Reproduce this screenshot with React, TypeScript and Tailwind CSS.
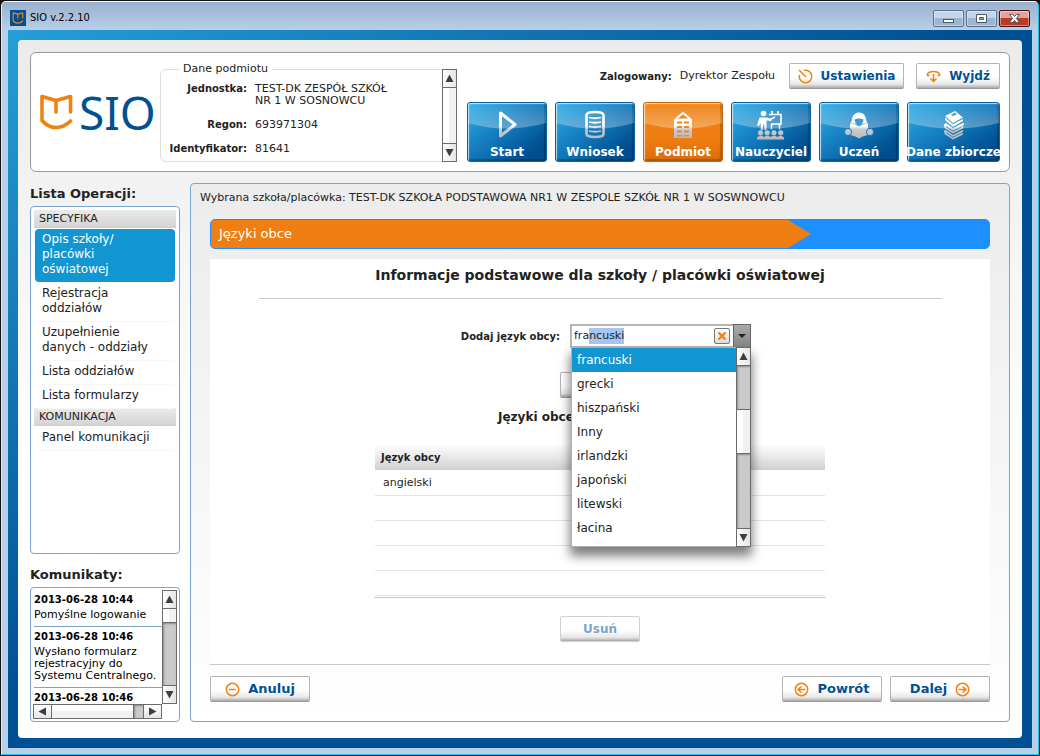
import { useEffect, useRef, type ReactNode } from "react";

const MENU = [
  {
    title: "SPECYFIKA",
    items: ["Opis szkoły/ placówki oświatowej", "Rejestracja oddziałów", "Uzupełnienie danych - oddziały", "Lista oddziałów", "Lista formularzy"],
  },
  { title: "KOMUNIKACJA", items: ["Panel komunikacji"] },
];

const MESSAGES = [
  { date: "2013-06-28 10:44", text: "Pomyślne logowanie" },
  { date: "2013-06-28 10:46", text: "Wysłano formularz rejestracyjny do Systemu Centralnego." },
  { date: "2013-06-28 10:46", text: "" },
];

const LANGUAGES = ["francuski", "grecki", "hiszpański", "Inny", "irlandzki", "japoński", "litewski", "łacina"];

function Mark({ className }: { className: string }) {
  return (
    <svg viewBox="0 0 33 36" fill="none" stroke="#f0820f" strokeWidth="3.600" strokeLinecap="round" strokeLinejoin="round" className={className} aria-hidden="true">
      <path d="M30.500 18V2.500L16 6.500L2 2.500V26.500Q8 33.500 16 33.500Q24 33.500 30.500 27" />
      <path d="M16 7V18" />
    </svg>
  );
}

function Arrow({ dir }: { dir: "up" | "down" | "left" | "right" }) {
  const d = { up: "M4.500 0.500L8.500 8H0.500Z", down: "M4.500 8.500L8.500 1H0.500Z", left: "M0.500 4.500L8 0.500V8.500Z", right: "M8.500 4.500L1 0.500V8.500Z" }[dir];
  return (
    <svg viewBox="0 0 9 9" className="size-[9px]" aria-hidden="true">
      <path d={d} fill="#3d3d3d" />
    </svg>
  );
}

function VScroll({ before, thumb, after }: { before: string; thumb: string; after: string }) {
  const button = "flex h-[18px] shrink-0 items-center justify-center border-[#6b6b6b] bg-linear-to-r from-white to-[#e4e4e4]";
  return (
    <div className="flex w-[15px] shrink-0 flex-col border border-[#6b6b6b] bg-[#cacaca]">
      <button type="button" aria-label="Przewiń w górę" className={`${button} border-b`}><Arrow dir="up" /></button>
      <div className={`${before} shadow-[inset_1px_1px_2px_#8c8c8c]`} />
      <div className={`${thumb} border-[#6b6b6b] bg-linear-to-r from-white from-50% to-[#f1f1f1] to-50%`} />
      <div className={`${after} shadow-[inset_1px_1px_2px_#8c8c8c]`} />
      <button type="button" aria-label="Przewiń w dół" className={`${button} border-t`}><Arrow dir="down" /></button>
    </div>
  );
}

function PushButton({ children, className = "", disabled = false, label }: { children?: ReactNode; className?: string; disabled?: boolean; label?: string }) {
  return (
    <button
      type="button"
      disabled={disabled}
      aria-label={label}
      className={`flex h-[26px] items-center justify-center gap-2 rounded-[2px] border border-[#b4b4b4] border-b-[#989898] bg-linear-to-b from-white from-55% via-[#e6e6e6] via-85% to-[#a8a8a8] font-bold text-[#005193] disabled:border-[#cfcfcf] disabled:text-[#7ba5cb] ${className}`}
    >
      {children}
    </button>
  );
}

function RoundIcon({ d }: { d: string }) {
  return (
    <svg viewBox="0 0 15 15" fill="none" stroke="#f0820f" strokeWidth="1.500" className="size-[15px]" aria-hidden="true">
      <circle cx="7.500" cy="7.500" r="6.200" />
      <path d={d} />
    </svg>
  );
}

function NavTile({ label, icon, active = false, wide = false }: { label: string; icon: ReactNode; active?: boolean; wide?: boolean }) {
  const tone = active ? "border-[#c9650a] bg-linear-to-b from-[#ef7f12] from-60% to-[#dc6c08]" : "border-[#0a63a5] bg-linear-to-br from-[#2aa9e4] from-5% via-[#1176b8] via-50% to-[#004d8e] to-85%";
  return (
    <button
      type="button"
      className={`relative flex h-[60px] ${wide ? "w-[93px]" : "w-20"} flex-col items-center justify-between rounded-[3px] border pt-[7px] text-[12px] leading-[18px] font-bold whitespace-nowrap text-white shadow-[inset_1px_1px_1px_rgba(255,255,255,0.7),inset_-2px_-2px_1px_rgba(0,0,0,0.2)] ${tone}`}
    >
      <svg viewBox="0 0 80 26" preserveAspectRatio="none" className="absolute inset-x-0 top-0 h-[26px] w-full" aria-hidden="true">
        <defs>
          <linearGradient id="tileGloss" x1="0" y1="0" x2="0" y2="1">
            <stop offset="0" stopColor="#fff" stopOpacity="0.050" />
            <stop offset="1" stopColor="#fff" stopOpacity="0.320" />
          </linearGradient>
        </defs>
        <path d="M0 0H80V20Q40 31 0 20Z" fill="url(#tileGloss)" />
      </svg>
      <svg viewBox="0 0 32 32" className="relative size-8" aria-hidden="true">
        <defs>
          <linearGradient id="tileInk" gradientUnits="userSpaceOnUse" x1="0" y1="0" x2="0" y2="32">
            <stop offset="0.500" stopColor="#fff" />
            <stop offset="0.600" stopColor="#c8cccf" />
            <stop offset="1" stopColor="#b0b4b8" />
          </linearGradient>
        </defs>
        {icon}
      </svg>
      <span className="relative">{label}</span>
    </button>
  );
}

const INK = "url(#tileInk)";

const startIcon = <path d="M9.500 3V26L24 14.500Z" fill="none" stroke={INK} strokeWidth="3" strokeLinejoin="round" />;

const databaseIcon = (
  <g fill="none" stroke={INK}>
    <path d="M7.500 5Q7.500 2 16 2T24.500 5V24Q24.500 27 16 27T7.500 24Z" strokeWidth="2.600" />
    <path d="M10 7.500Q16 9 22 7.500M10 12Q16 13.500 22 12M10 16.500Q16 18 22 16.500M10 21Q16 22.500 22 21" strokeWidth="1.800" />
  </g>
);

const buildingIcon = (
  <g>
    <path d="M7 28V9.500L16 1.500L25 9.500V28Z" fill={INK} />
    <path d="M11 8.500L16 4.200L21 8.500ZM10 11.500H15V13.500H10ZM17 11.500H22V13.500H17ZM10 16H15V18H10ZM17 16H22V18H17ZM10 20.500H15V22.500H10ZM17 20.500H22V22.500H17ZM10 25H15V26.500H10ZM17 25H22V26.500H17Z" fill="#ef8724" />
  </g>
);

const teacherIcon = (
  <g fill={INK}>
    <circle cx="8.500" cy="3.500" r="2.800" />
    <path d="M4.500 7.500H11.500L17 9L16 11L11.500 10.500V20H9.200V14.500H8V20H5.700V13L3.500 16.500L2 15Z" />
    <path d="M14 4.500H26V14H16M17 4V1M23 4V1M16.500 14V19.500M24.500 14V19.500M15 9.500L20 7" fill="none" stroke={INK} strokeWidth="1.600" />
    <circle cx="5.500" cy="22.800" r="2.600" /><circle cx="12.200" cy="22.800" r="2.600" /><circle cx="19" cy="22.800" r="2.600" /><circle cx="25.700" cy="22.800" r="2.600" />
    <path d="M2 29.500V27.500Q5.500 24.500 9 27Q12.500 24.500 15.500 27Q19 24.500 22.500 27Q26 24.500 29 27.500V29.500Z" />
  </g>
);

const pupilIcon = (
  <g>
    <path d="M9 10Q9.500 2.500 16 2.500T23 10L24.500 13.500H7.500Z" fill="#fff" />
    <path d="M11.500 9.500Q16 7.500 20.500 9.500Q20.500 13 16 15.500Q11.500 13 11.500 9.500Z" fill="#3a9bd1" />
    <path d="M7 13.500Q12 13.500 16 16.500Q20 13.500 25 13.500V25Q20 25.500 16 28.500Q12 25.500 7 25Z" fill={INK} />
    <circle cx="5" cy="22" r="3.600" fill={INK} stroke="#1878b8" /><circle cx="27" cy="22" r="3.600" fill={INK} stroke="#1878b8" />
  </g>
);

const booksIcon = (
  <g fill={INK}>
    <path d="M7 6L17 1L25 7.500L15 13Z" />
    <path d="M7 7.500L15 14.300L25 9V11L15 16.800L7 10Z" />
    <path d="M13 4.500L17 2.600L19 4.200L15 6.300Z" fill="#4aa3d6" />
    <path d="M6 14.500L8 13L15 18L25 13L26.500 14L24.500 15.500L25.500 18L15 23.500L6.500 18Z" />
    <path d="M6 20.500L8 20L15 25L24.500 20L25.500 21L24 22L25 24.500L15 29.500L6.500 24Z" />
    <path d="M8 16.500L15 21.300L24 16.500M8 22.500L15 27.300L24 22.500" fill="none" stroke="#0f69ab" strokeWidth="0.700" />
  </g>
);

function WindowButton({ label, danger = false, children }: { label: string; danger?: boolean; children: ReactNode }) {
  return (
    <button
      type="button"
      aria-label={label}
      className={`flex h-[17px] w-[31px] items-center justify-center rounded-[2px] border shadow-[inset_0_0_0_1px_rgba(255,255,255,0.4)] ${danger ? "border-[#4a1019] bg-linear-to-b from-[#e4a299] from-50% to-[#b93a26] to-50%" : "border-[#5c6f8b] bg-linear-to-b from-[#c3d5ea] from-50% to-[#9bb6d2] to-50%"}`}
    >
      <svg viewBox="0 0 13 11" className="h-[11px] w-[13px]" stroke="#4f5867" fill="#fff" aria-hidden="true">{children}</svg>
    </button>
  );
}

function TitleBar() {
  return (
    <header className="-mx-1.5 flex h-7 shrink-0 items-center bg-linear-to-b from-[#9ab1cf] to-[#b8cfe9] px-2 pt-1.5 pb-0.5">
      <span className="flex size-4 items-center justify-center bg-[#005193]"><Mark className="size-3" /></span>
      <h1 className="ml-1 grow font-['DejaVu_Sans_Condensed','DejaVu_Sans',sans-serif] text-[11px] text-black">SIO v.2.2.10</h1>
      <div className="flex gap-0.5">
        <WindowButton label="Minimalizuj"><rect x="1.500" y="6.500" width="10" height="3" /></WindowButton>
        <WindowButton label="Maksymalizuj"><path fillRule="evenodd" d="M1.500 1.500H11.500V9.500H1.500ZM4.500 4.500V6.500H8.500V4.500Z" /></WindowButton>
        <WindowButton label="Zamknij" danger><path d="M1.500 1.500H4.500L6.500 3.500L8.500 1.500H11.500L8.500 5.500L11.500 9.500H8.500L6.500 7.500L4.500 9.500H1.500L4.500 5.500Z" /></WindowButton>
      </div>
    </header>
  );
}

function TopCard() {
  const rows = [
    ["Jednostka:", "TEST-DK ZESPÓŁ SZKÓŁ NR 1 W SOSNOWCU"],
    ["Regon:", "693971304"],
    ["Identyfikator:", "81641"],
  ];
  return (
    <section className="mb-[11px] flex h-[120px] shrink-0 rounded-md border border-[#9b9b9b] bg-white">
      <div className="flex w-[129px] shrink-0 items-center gap-1.5 pl-[9px]">
        <Mark className="h-9 w-[33px]" />
        <span className="font-['Noto_Sans',sans-serif] text-[46px] leading-[50px] text-[#005193]">SIO</span>
      </div>
      <div className="relative mt-[9px] h-[100px] w-[297px] shrink-0">
        <fieldset className="h-full rounded-md border border-[#dcdcdc]">
          <legend className="ml-[18px] px-1 text-[11px] leading-[14px]">Dane podmiotu</legend>
          <dl className="grid grid-cols-[86px_150px] gap-x-2 text-[11px] leading-3">
            {rows.map(([k, v]) => (
              <div key={k} className="contents">
                <dt className="mt-[7px] mb-[5px] text-right text-[10px] leading-3 font-bold whitespace-nowrap">{k}</dt>
                <dd className="mt-[7px] mb-[5px]">{v}</dd>
              </div>
            ))}
          </dl>
        </fieldset>
        <div className="absolute top-[7px] right-0 bottom-0 flex bg-white">
          <VScroll before="h-0" thumb="grow" after="h-0" />
        </div>
      </div>
      <div className="flex grow flex-col items-end pr-[9px]">
        <div className="mt-2.5 flex items-center">
          <span className="mr-2 text-[10px] font-bold">Zalogowany:</span>
          <span className="mr-3.5 text-[11px]">Dyrektor Zespołu</span>
          <PushButton className="mr-3 w-[115px] text-[12px]">
            <svg viewBox="0 0 15 15" fill="none" stroke="#f0820f" strokeWidth="1.500" className="size-[15px]" aria-hidden="true">
              <path d="M6 1.500A6.200 6.200 0 1 1 1.500 6M1 1L8 8" />
            </svg>
            Ustawienia
          </PushButton>
          <PushButton className="w-[84px] text-[12px]">
            <svg viewBox="0 0 15 15" fill="none" stroke="#f0820f" strokeWidth="1.500" className="size-[15px]" aria-hidden="true">
              <path d="M3.500 6.500H1.500V4.500Q3.500 2.500 7.500 2.500T13.500 4.500V6.500H11.500M7.500 5V12.500M4.500 9.500L7.500 12.500L10.500 9.500" />
            </svg>
            Wyjdź
          </PushButton>
        </div>
        <nav className="mt-[13px] flex gap-2">
          <NavTile label="Start" icon={startIcon} />
          <NavTile label="Wniosek" icon={databaseIcon} />
          <NavTile label="Podmiot" icon={buildingIcon} active />
          <NavTile label="Nauczyciel" icon={teacherIcon} />
          <NavTile label="Uczeń" icon={pupilIcon} />
          <NavTile label="Dane zbiorcze" icon={booksIcon} wide />
        </nav>
      </div>
    </section>
  );
}

function Sidebar() {
  return (
    <aside className="flex w-[150px] shrink-0 flex-col pt-0.5">
      <h2 className="mb-[3px] text-[13px] leading-[18px] font-bold">Lista Operacji:</h2>
      <nav className="grow rounded border border-[#7ba5cb] bg-white p-[3px]">
        {MENU.map((group) => (
          <section key={group.title}>
            <h3 className="mb-px border-b border-[#cfcfcf] bg-linear-to-b from-[#ebebeb] to-[#d4d4d4] pl-[5px] text-[11px] leading-[17px]">{group.title}</h3>
            <ul className="flex flex-col gap-px px-px">
              {group.items.map((item, i) => {
                const active = group.title === "SPECYFIKA" && i === 0;
                return (
                  <li key={item}>
                    <a href="#" className={`block rounded pt-[3px] pr-4 pb-[5px] pl-[7px] text-[12px] leading-[15px] ${active ? "bg-[#1196d1] text-white" : "shadow-[0_1px_0_#f7f7f7]"}`}>
                      {item}
                    </a>
                  </li>
                );
              })}
            </ul>
          </section>
        ))}
      </nav>
      <h2 className="mt-3 mb-[3px] text-[13px] leading-[18px] font-bold">Komunikaty:</h2>
      <section className="flex h-[135px] shrink-0 rounded border border-[#7ba5cb] bg-white p-0.5">
        <div className="flex min-w-0 grow flex-col">
          <div className="grow overflow-hidden">
            {MESSAGES.map((m, i) => (
              <article key={i} className="ml-px border-b border-[#7ba5cb] pt-px pb-[5px] text-black">
                <h4 className="mb-px text-[10px] leading-[17px] font-bold">{m.date}</h4>
                <p className="text-[11px] leading-3">{m.text}</p>
              </article>
            ))}
          </div>
          <div className="flex h-[15px] shrink-0 border border-[#6b6b6b] bg-[#cacaca]">
            <button type="button" aria-label="Przewiń w lewo" className="flex w-[18px] items-center justify-center border-r border-[#6b6b6b] bg-linear-to-b from-white to-[#e4e4e4]"><Arrow dir="left" /></button>
            <div className="grow bg-linear-to-b from-white from-50% to-[#f1f1f1] to-50%" />
            <div className="w-2.5 border-l border-[#6b6b6b] shadow-[inset_1px_1px_2px_#8c8c8c]" />
            <button type="button" aria-label="Przewiń w prawo" className="flex w-[18px] items-center justify-center border-l border-[#6b6b6b] bg-linear-to-b from-white to-[#e4e4e4]"><Arrow dir="right" /></button>
          </div>
        </div>
        <div className="mb-[15px] flex">
          <VScroll before="h-0" thumb="h-3.5 border-b" after="grow" />
        </div>
      </section>
    </aside>
  );
}

function LanguagePicker() {
  const input = useRef<HTMLInputElement>(null);
  useEffect(() => {
    input.current?.focus();
    input.current?.setSelectionRange(3, 9);
  }, []);
  return (
    <div className="relative z-10 h-6 w-[181px]">
      <div className="flex h-full border-2 border-[#b5b5b5] bg-white">
        <input
          id="lang"
          ref={input}
          defaultValue="francuski"
          role="combobox"
          aria-expanded="true"
          aria-controls="lang-list"
          className="w-0 grow pl-0.5 text-[11px] outline-none selection:bg-[#a6c6f1] selection:text-[#222]"
        />
        <button type="button" aria-label="Wyczyść" className="mt-0.5 mr-[3px] flex size-4 items-center justify-center rounded-[2px] border border-[#777] bg-linear-to-b from-white to-[#ddd]">
          <svg viewBox="0 0 10 10" className="size-2.5" stroke="#f0820f" strokeWidth="2.400" aria-hidden="true"><path d="M1.500 1.500L8.500 8.500M8.500 1.500L1.500 8.500" /></svg>
        </button>
        <button type="button" aria-label="Rozwiń listę" className="-my-0.5 -mr-0.5 flex w-[18px] items-center justify-center border border-[#666] bg-linear-to-b from-[#aaa] to-[#858585]">
          <svg viewBox="0 0 8 4" className="h-1 w-2" aria-hidden="true"><path d="M0 0H8L4 4Z" fill="#222" /></svg>
        </button>
      </div>
      <div className="absolute top-[23px] right-0 left-px flex border border-r-0 border-[#b0b0b0] bg-white shadow-[0_8px_10px_1px_rgba(0,0,0,0.5)]">
        <ul id="lang-list" role="listbox" aria-label="Języki" className="h-[198px] grow">
          {LANGUAGES.map((l, i) => (
            <li key={l} role="option" aria-selected={i === 0} className={`px-[5px] text-[12px] leading-6 ${i === 0 ? "bg-[#1196d1] text-white" : ""}`}>{l}</li>
          ))}
        </ul>
        <div className="-my-px flex"><VScroll before="h-[43px]" thumb="h-[45px] border-y" after="grow" /></div>
      </div>
    </div>
  );
}

function MainPanel() {
  return (
    <main className="flex min-w-0 grow flex-col rounded border border-[#7ba5cb] bg-linear-to-b from-[#ececec] to-white px-[19px] pb-[19px]">
      <p className="-ml-2.5 pt-[5px] text-[11px] leading-[18px]">Wybrana szkoła/placówka: TEST-DK SZKOŁA PODSTAWOWA NR1 W ZESPOLE SZKÓŁ NR 1 W SOSWNOWCU</p>
      <div className="mt-3 flex h-[30px] shrink-0 overflow-hidden rounded-[5px] border border-[#1e8fff] bg-[#1e8fff]">
        <div className="flex w-[577px] shrink-0 items-center bg-[#ef7f12] pl-2 text-[13px] text-white">Języki obce</div>
        <svg viewBox="0 0 23 28" className="h-7 w-[23px]" aria-hidden="true"><path d="M0 0L23 14L0 28Z" fill="#ef7f12" /></svg>
      </div>
      <section className="mt-2.5 flex grow flex-col items-center bg-white">
        <h2 className="mt-1.5 text-[14px] leading-5 font-bold">Informacje podstawowe dla szkoły / placówki oświatowej</h2>
        <hr className="mt-[13px] w-[683px] border-[#c8c8c8]" />
        <div className="mt-[25px] flex w-full items-center">
          <label htmlFor="lang" className="w-[350px] shrink-0 text-right text-[10px] font-bold">Dodaj język obcy:</label>
          <div className="ml-2.5"><LanguagePicker /></div>
        </div>
        <PushButton label="Dodaj" className="mt-6 w-20" />
        <h3 className="mt-2.5 w-[204px] text-[12px] leading-[18px] font-bold">Języki obce</h3>
        <div className="mt-[18px] w-[452px] border-b border-[#c8c8c8] px-px pb-px">
          <table className="w-full border-collapse text-left">
            <thead>
              <tr className="bg-linear-to-b from-white via-[#e9e9e9] via-50% to-[#cfcfcf]">
                <th scope="col" className="h-[26px] px-1.5 text-[10px]">Język obcy</th>
              </tr>
            </thead>
            <tbody>
              {["angielski", "", "", "", ""].map((l, i) => (
                <tr key={i} className="border-b border-[#e4e4e4]">
                  <td className="h-[25px] px-2 pt-0.5 text-[11px]">{l}</td>
                </tr>
              ))}
            </tbody>
          </table>
        </div>
        <PushButton disabled className="mt-[18px] w-20 text-[12px]">Usuń</PushButton>
      </section>
      <footer className="mt-auto flex shrink-0 gap-2 border-t border-[#c8c8c8] pt-[11px]">
        <PushButton className="w-[100px] text-[13px]"><RoundIcon d="M4 7.500H11" />Anuluj</PushButton>
        <PushButton className="ml-auto w-[100px] text-[13px]"><RoundIcon d="M11.500 7.500H4M7.500 4.500L4 7.500L7.500 10.500" />Powrót</PushButton>
        <PushButton className="w-[100px] text-[13px]">Dalej<RoundIcon d="M3.500 7.500H11M7.500 4.500L11 7.500L7.500 10.500" /></PushButton>
      </footer>
    </main>
  );
}

export default function App() {
  return (
    <div className="flex min-h-screen flex-col bg-[#111] p-px font-['DejaVu_Sans',Verdana,sans-serif] text-[#222]">
      <div className="flex grow flex-col overflow-hidden rounded-t-[5px] border border-t-white border-r-[#25c3e8] border-b-[#25c3e8] border-l-[#e6eef8] bg-[#b9d0ea] px-1.5 pb-1.5">
        <TitleBar />
        <div className="flex grow flex-col bg-[linear-gradient(145deg,#259fd6_0%,#005193_46%)] p-2.5">
          <div className="flex grow flex-col rounded bg-linear-to-b from-[#ebebeb] via-white via-60% to-white px-3 pt-3 pb-4">
            <TopCard />
            <div className="flex grow gap-2.5">
              <Sidebar />
              <MainPanel />
            </div>
          </div>
        </div>
      </div>
    </div>
  );
}
